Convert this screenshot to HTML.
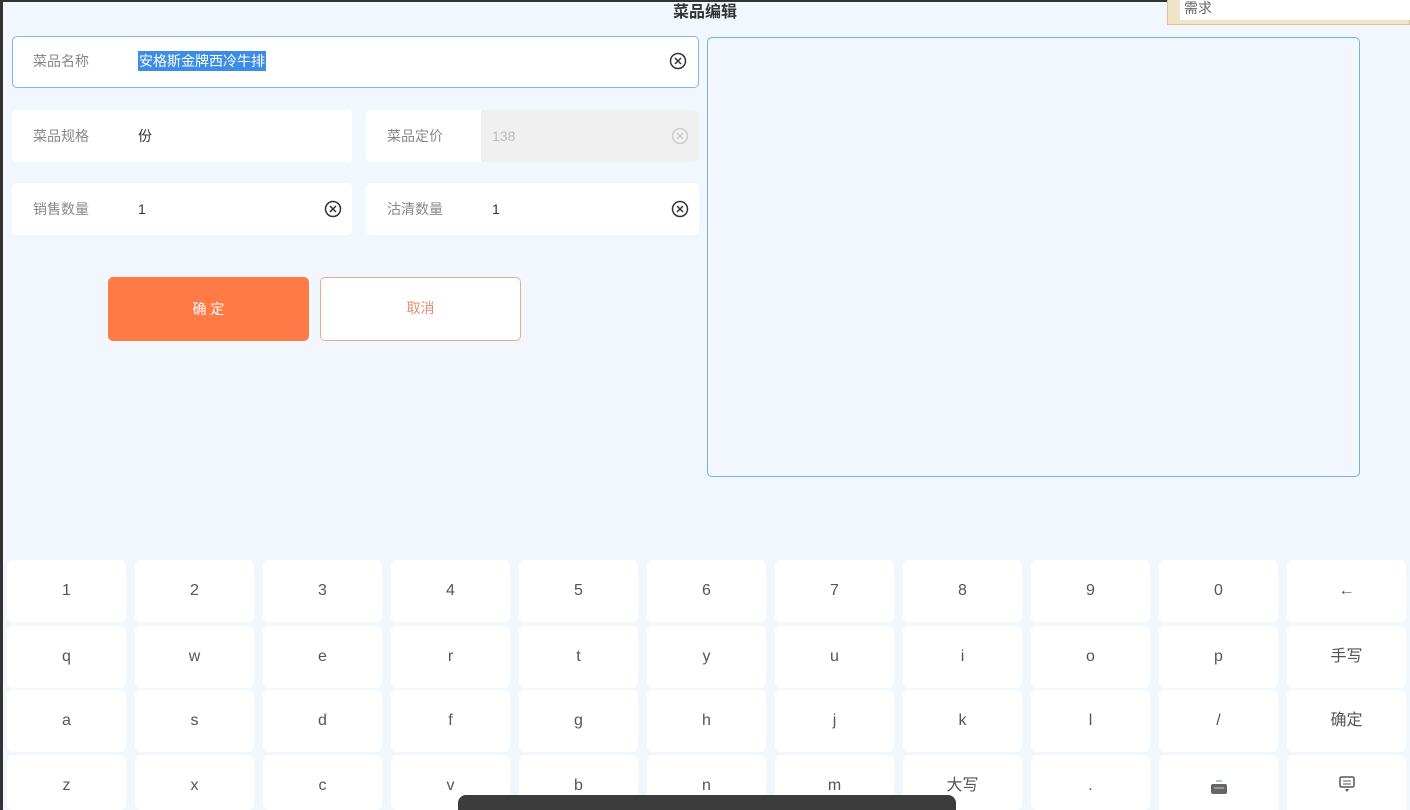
<!DOCTYPE html>
<html style="width:1410px;height:810px;overflow:hidden"><head><meta charset="utf-8">
<style>
*{margin:0;padding:0;box-sizing:border-box}
body{width:1410px;height:810px;overflow:hidden;background:#f2f7fd;font-family:"Liberation Sans","Noto Sans CJK SC",sans-serif;position:relative;color:#333}
.abs{position:absolute}
.field{position:absolute;background:#fff;border-radius:5px;height:52px}
.lab{position:absolute;left:21px;top:0;line-height:52px;font-size:14px;color:#888}
.val{position:absolute;left:126px;top:0;line-height:52px;font-size:14px;color:#333}
.clr{position:absolute;top:17px;width:18px;height:18px}
.key{position:absolute;width:119px;height:62px;background:#fff;border-radius:6px;text-align:center;line-height:62px;font-size:16px;color:#555}
</style></head><body>
<div class="abs" style="left:0;top:0;width:1410px;height:2px;background:#333"></div>
<div class="abs" style="left:0;top:0;width:3px;height:810px;background:#333"></div>
<div class="abs" style="left:1240px;top:0;width:110px;height:3px;background:#1d2b5a"></div>
<div class="abs" style="left:1167px;top:0;width:243px;height:25px;background:#f0e4c8;border:1px solid #d9c49a;border-top:none"></div>
<div class="abs" style="left:1180px;top:0;width:230px;height:20px;background:#fff;font-size:14px;line-height:16px;color:#666;padding-left:4px">需求</div>
<div class="abs" style="left:0;top:2px;width:1410px;text-align:center;font-size:16px;font-weight:bold;line-height:22px;color:#333">菜品编辑</div>

<div class="field" style="left:12px;top:36px;width:687px;height:52px;border:1.5px solid #7fb9e0">
 <div class="lab" style="line-height:49px;top:0;left:20px">菜品名称</div>
 <div class="abs" style="left:125px;top:14px;height:20px;background:#3b8de6;color:#fff;font-size:14px;line-height:20px;padding:0 1px">安格斯金牌西冷牛排</div>
 <svg class="clr" style="left:656px;top:15px" viewBox="0 0 18 18"><circle cx="9" cy="9" r="7.5" fill="none" stroke="#333" stroke-width="1.5"/><path d="M6 6l6 6M12 6l-6 6" stroke="#333" stroke-width="1.5"/></svg>
</div>

<div class="field" style="left:12px;top:110px;width:340px"><div class="lab">菜品规格</div><div class="val">份</div></div>
<div class="field" style="left:366px;top:110px;width:333px;overflow:hidden"><div class="lab">菜品定价</div>
 <div class="abs" style="left:115px;top:0;width:218px;height:52px;background:#f0f0f0"></div>
 <div class="val" style="color:#bbb">138</div>
 <svg class="clr" style="left:305px" viewBox="0 0 18 18"><circle cx="9" cy="9" r="7.5" fill="none" stroke="#ccc" stroke-width="1.5"/><path d="M6 6l6 6M12 6l-6 6" stroke="#ccc" stroke-width="1.5"/></svg></div>

<div class="field" style="left:12px;top:183px;width:340px"><div class="lab">销售数量</div><div class="val">1</div><svg class="clr" style="left:312px" viewBox="0 0 18 18"><circle cx="9" cy="9" r="7.5" fill="none" stroke="#333" stroke-width="1.5"/><path d="M6 6l6 6M12 6l-6 6" stroke="#333" stroke-width="1.5"/></svg></div>
<div class="field" style="left:366px;top:183px;width:333px"><div class="lab">沽清数量</div><div class="val">1</div><svg class="clr" style="left:305px" viewBox="0 0 18 18"><circle cx="9" cy="9" r="7.5" fill="none" stroke="#333" stroke-width="1.5"/><path d="M6 6l6 6M12 6l-6 6" stroke="#333" stroke-width="1.5"/></svg></div>

<div class="abs" style="left:108px;top:277px;width:201px;height:64px;background:#ff7a47;border-radius:5px;color:#fff;text-align:center;line-height:64px;font-size:14px">确 定</div>
<div class="abs" style="left:320px;top:277px;width:201px;height:64px;background:#fff;border:1.5px solid #f0a890;border-radius:5px;color:#e58a6e;text-align:center;line-height:61px;font-size:14px">取消</div>

<div class="abs" style="left:707px;top:37px;width:653px;height:440px;border:1.5px solid #6fb3e0;border-radius:5px;background:#f2f7fd"></div>

<div id="kb"></div>
<div class="key" style="left:1159px;top:755px"><svg width="18" height="16" style="margin-top:24px" viewBox="0 0 18 16"><path d="M6 2h6" stroke="#6ab" stroke-width="1.2"/><rect x="1" y="5" width="16" height="10" rx="2" fill="#666"/><path d="M4 9h10" stroke="#ccc"/></svg></div>
<div class="key" style="left:1287px;top:755px"><svg width="16" height="18" style="margin-top:21px" viewBox="0 0 16 18"><rect x="1" y="1" width="14" height="10" rx="1.5" fill="none" stroke="#555" stroke-width="1.5"/><path d="M4 5h8M4 8h8" stroke="#555"/><path d="M6 13h4l-2 3z" fill="#555"/></svg></div>
<div class="abs" style="left:458px;top:795px;width:498px;height:15px;background:#3c3c3c;border-radius:8px 8px 0 0"></div>
<script>
var rows=[["1","2","3","4","5","6","7","8","9","0","←"],["q","w","e","r","t","y","u","i","o","p","手写"],["a","s","d","f","g","h","j","k","l","/","确定"],["z","x","c","v","b","n","m","大写",".","",""]];
var tops=[560,626,690,755],h="";
rows.forEach(function(r,ri){r.forEach(function(k,ci){if(ri==3&&ci>=9)return;h+='<div class="key" style="left:'+(7+128*ci)+'px;top:'+tops[ri]+'px;'+(ri==3?'height:55px':'')+'">'+k+'</div>';});});
document.getElementById("kb").innerHTML=h;
</script>
</body></html>
